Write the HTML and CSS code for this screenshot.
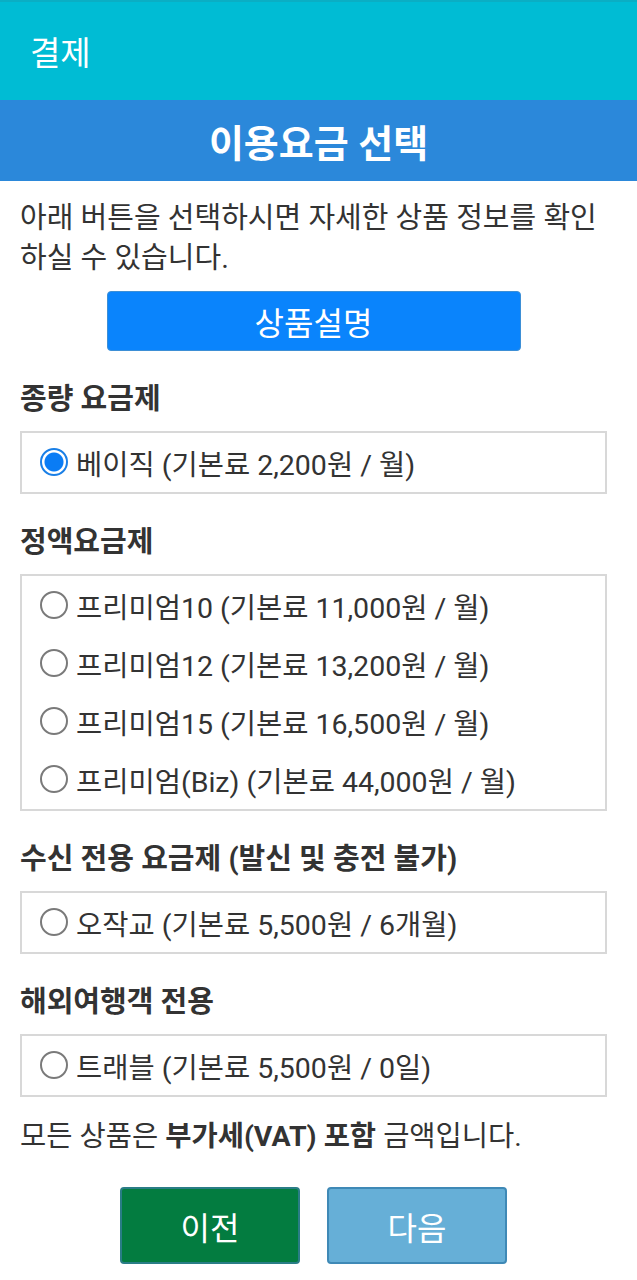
FILE: index.html
```html
<!DOCTYPE html>
<html lang="ko">
<head>
  <meta charset="UTF-8" />
  <title>결제</title>
  <link rel="stylesheet" href="styles.css">
</head>
<body>
  <header class="appbar">결제</header>
  <div class="titlebar">이용요금 선택</div>

  <main class="content">
    <p class="intro">아래 버튼을 선택하시면 자세한 상품 정보를 확인 하실 수 있습니다.</p>
    <div class="info-wrap">
      <button type="button" class="btn-info">상품설명</button>
    </div>

    <h2 class="group-title">종량 요금제</h2>
    <div class="group">
      <label class="option"><input type="radio" name="plan" checked /> 베이직 (기본료 2,200원 / 월)</label>
    </div>

    <h2 class="group-title">정액요금제</h2>
    <div class="group">
      <label class="option"><input type="radio" name="plan" /> 프리미엄10 (기본료 11,000원 / 월)</label>
      <label class="option"><input type="radio" name="plan" /> 프리미엄12 (기본료 13,200원 / 월)</label>
      <label class="option"><input type="radio" name="plan" /> 프리미엄15 (기본료 16,500원 / 월)</label>
      <label class="option"><input type="radio" name="plan" /> 프리미엄(Biz) (기본료 44,000원 / 월)</label>
    </div>

    <h2 class="group-title">수신 전용 요금제 (발신 및 충전 불가)</h2>
    <div class="group">
      <label class="option"><input type="radio" name="plan" /> 오작교 (기본료 5,500원 / 6개월)</label>
    </div>

    <h2 class="group-title">해외여행객 전용</h2>
    <div class="group">
      <label class="option"><input type="radio" name="plan" /> 트래블 (기본료 5,500원 / 0일)</label>
    </div>

    <p class="notice">모든 상품은 <b>부가세(VAT) 포함</b> 금액입니다.</p>

    <div class="nav">
      <button type="button" class="btn-prev">이전</button>
      <button type="button" class="btn-next">다음</button>
    </div>
  </main>
</body>
</html>
```

FILE: styles.css
```css
body {
  margin: 0;
  background: #fff;
  color: #333;
  font-family: Roboto, "Noto Sans CJK KR", sans-serif;
}
.appbar {
  height: 100px;
  box-sizing: border-box;
  border-top: 2px solid #0aaec4;
  background: #00bcd4;
  color: #fff;
  font-size: 33px;
  padding-left: 30px;
  display: flex;
  align-items: center;
}
.titlebar {
  height: 81px;
  background: #2b88da;
  color: #fff;
  font-size: 38px;
  font-weight: bold;
  display: flex;
  align-items: center;
  justify-content: center;
}
.content {
  padding: 0 30px 40px 20px;
}
.intro {
  margin: 17px 0 0;
  font-size: 29px;
  line-height: 40px;
}
.info-wrap {
  display: flex;
  justify-content: center;
  margin-top: 13px;
}
.btn-info {
  width: 414px;
  height: 60px;
  background: #0a84fc;
  border: 1px solid #3d8fd6;
  border-radius: 4px;
  color: #fff;
  font-family: inherit;
  font-size: 32px;
  padding: 0;
}
.group-title {
  margin: 28px 0 0;
  font-size: 29px;
  line-height: 40px;
  font-weight: bold;
}
.group {
  margin-top: 12px;
  border: 2px solid #d8d8d8;
  padding: 0 0 1px;
}
.option {
  height: 58px;
  display: flex;
  align-items: center;
  font-size: 28.5px;
  padding-left: 18px;
  gap: 8px;
}
.option input {
  appearance: none;
  margin: 0;
  width: 28px;
  height: 28px;
  border: 2px solid #7a7a7a;
  border-radius: 50%;
  box-sizing: border-box;
  flex: none;
}
.option input:checked {
  border-color: #1a7fe6;
  background: radial-gradient(circle, #0a7cf5 0 9px, #fff 10px);
}
.notice {
  margin: 20px 0 0;
  font-size: 28.5px;
  line-height: 40px;
}
.nav {
  display: flex;
  justify-content: center;
  gap: 27px;
  margin-top: 30px;
}
.nav button {
  width: 180px;
  height: 77px;
  border-radius: 4px;
  color: #fff;
  font-family: inherit;
  font-size: 32px;
  padding: 0;
}
.btn-prev {
  background: #037c40;
  border: 2px solid #2a7d86;
}
.btn-next {
  background: #66afd7;
  border: 2px solid #3f89b6;
}
```
